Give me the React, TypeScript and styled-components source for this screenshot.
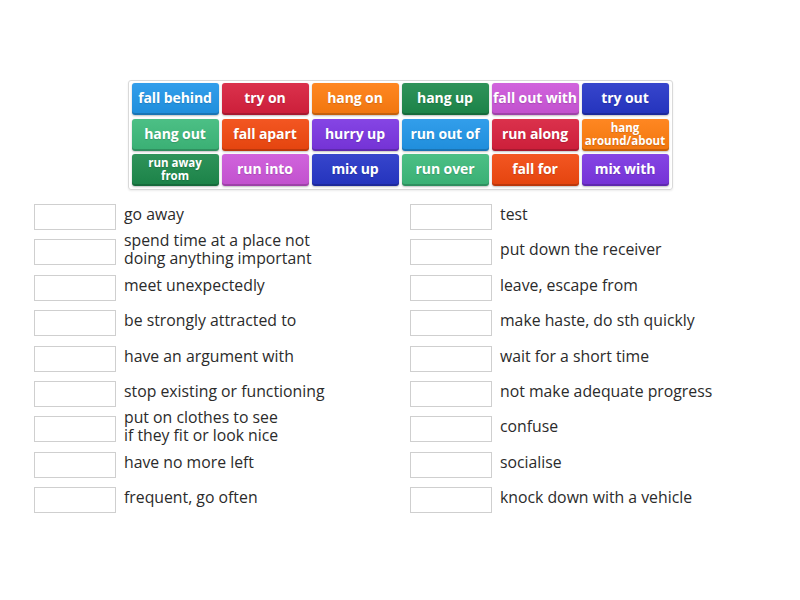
import React from 'react';
import styled, { createGlobalStyle } from 'styled-components';

const colors: Record<string, string> = {
  blue: '#2196e9',
  red: '#d8203d',
  orange: '#ff7d0f',
  darkgreen: '#1d8a4c',
  pink: '#cd56da',
  navy: '#2636c8',
  green: '#3dba7b',
  orangered: '#f2480f',
  purple: '#7b35e2',
};

const tiles: { label: string; color: string }[] = [
  { label: 'fall behind', color: 'blue' },
  { label: 'try on', color: 'red' },
  { label: 'hang on', color: 'orange' },
  { label: 'hang up', color: 'darkgreen' },
  { label: 'fall out with', color: 'pink' },
  { label: 'try out', color: 'navy' },
  { label: 'hang out', color: 'green' },
  { label: 'fall apart', color: 'orangered' },
  { label: 'hurry up', color: 'purple' },
  { label: 'run out of', color: 'blue' },
  { label: 'run along', color: 'red' },
  { label: 'hang around/about', color: 'orange' },
  { label: 'run away from', color: 'darkgreen' },
  { label: 'run into', color: 'pink' },
  { label: 'mix up', color: 'navy' },
  { label: 'run over', color: 'green' },
  { label: 'fall for', color: 'orangered' },
  { label: 'mix with', color: 'purple' },
];

// labels that wrap onto two lines in a tile
const split: Record<string, string[]> = {
  'run away from': ['run away', 'from'],
  'hang around/about': ['hang', 'around/about'],
};

const leftDefs = [
  ['go away'],
  ['spend time at a place not', 'doing anything important'],
  ['meet unexpectedly'],
  ['be strongly attracted to'],
  ['have an argument with'],
  ['stop existing or functioning'],
  ['put on clothes to see', 'if they fit or look nice'],
  ['have no more left'],
  ['frequent, go often'],
];

const rightDefs = [
  ['test'],
  ['put down the receiver'],
  ['leave, escape from'],
  ['make haste, do sth quickly'],
  ['wait for a short time'],
  ['not make adequate progress'],
  ['confuse'],
  ['socialise'],
  ['knock down with a vehicle'],
];

const GlobalStyle = createGlobalStyle`
  body {
    margin: 0;
    background: #fff;
    font-family: "Open Sans", "Noto Sans", sans-serif;
  }
`;

const Page = styled.div`
  width: 800px;
  height: 600px;
  padding-top: 80px;
  box-sizing: border-box;
`;

const TileBoard = styled.div`
  width: 545px;
  box-sizing: border-box;
  margin: 0 auto;
  padding: 2px 3px 3px;
  border: 1px solid #d9d9d9;
  border-radius: 3px;
  box-shadow: 0 1px 2px rgba(0, 0, 0, 0.08);
  display: grid;
  grid-template-columns: repeat(6, 87px);
  grid-auto-rows: 32px;
  gap: 3.5px 3px;
`;

const Tile = styled.div<{ $bg: string; $small?: boolean }>`
  display: flex;
  align-items: center;
  justify-content: center;
  text-align: center;
  border-radius: 3px;
  color: #fff;
  font-weight: 700;
  font-size: ${(p) => (p.$small ? '11.5px' : '14px')};
  line-height: ${(p) => (p.$small ? '13px' : '16px')};
  letter-spacing: ${(p) => (p.$small ? '0' : '-0.1px')};
  white-space: nowrap;
  background: linear-gradient(
      to bottom,
      rgba(255, 255, 255, 0.08),
      rgba(0, 0, 0, 0.06)
    ),
    ${(p) => p.$bg};
  box-shadow: inset 0 -2px 0 rgba(0, 0, 0, 0.18), 0 1px 2px rgba(0, 0, 0, 0.25);
  text-shadow: 0 1px 1px rgba(0, 0, 0, 0.15);
  padding-bottom: 2px;
  box-sizing: border-box;
`;

const Answers = styled.div`
  display: grid;
  grid-template-columns: 376px 376px;
  padding-left: 34px;
  margin-top: 14px;
`;

const Column = styled.div`
  display: flex;
  flex-direction: column;
  gap: 9.4px;
`;

const Row = styled.div`
  display: flex;
  align-items: center;
  height: 26px;
  gap: 8px;
`;

const Slot = styled.div`
  flex: none;
  width: 82px;
  height: 26px;
  box-sizing: border-box;
  border: 1px solid #cfcfcf;
  background: #fff;
`;

const Definition = styled.div`
  font-size: 15.8px;
  line-height: 18px;
  color: #2b2b2b;
  white-space: nowrap;
  padding-bottom: 6px;
`;

const DefColumn = ({ defs }: { defs: string[][] }) => (
  <Column>
    {defs.map((lines, i) => (
      <Row key={i}>
        <Slot />
        <Definition>
          {lines.map((l, j) => (
            <div key={j}>{l}</div>
          ))}
        </Definition>
      </Row>
    ))}
  </Column>
);

export default function App() {
  return (
    <Page>
      <GlobalStyle />
      <TileBoard>
        {tiles.map((t) => {
          const parts = split[t.label] ?? [t.label];
          return (
            <Tile key={t.label} $bg={colors[t.color]} $small={parts.length > 1}>
              <div>
                {parts.map((p) => (
                  <div key={p}>{p}</div>
                ))}
              </div>
            </Tile>
          );
        })}
      </TileBoard>
      <Answers>
        <DefColumn defs={leftDefs} />
        <DefColumn defs={rightDefs} />
      </Answers>
    </Page>
  );
}
